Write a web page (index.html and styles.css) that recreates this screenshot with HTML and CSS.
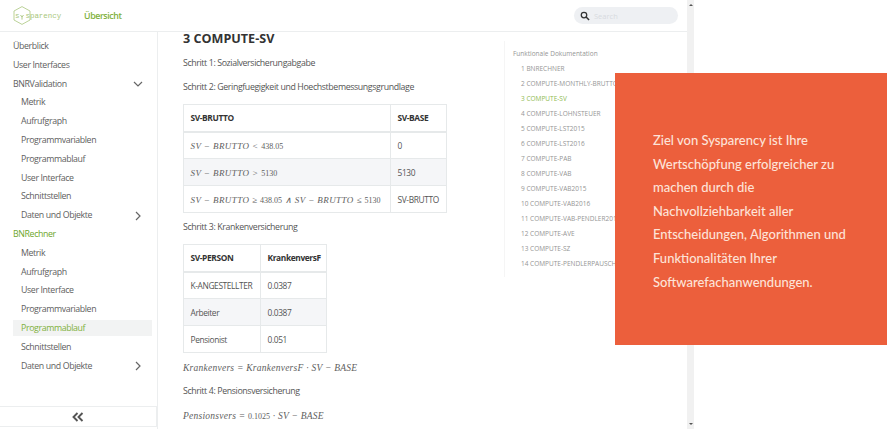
FILE: index.html
```html
<!DOCTYPE html>
<html lang="de">
<head>
<meta charset="utf-8">
<title>Sysparency</title>
<link rel="stylesheet" href="styles.css">
</head>
<body>
<div class="window">
  <div class="app">
    <header class="topbar">
      <div class="logo">
        <svg class="hex" viewBox="0 0 18 19" width="18" height="19"><path d="M9 .6 17 5v9l-8 4.4L1 14V5z" fill="none" stroke="#a9c77d" stroke-width=".8"/><path d="M7.5 9 9 11l1.500-2M9 11v2.600" fill="none" stroke="#9dbd6c" stroke-width=".8"/></svg>
        <span class="logo-s">s</span>
        <span class="logo-text">sparency</span>
      </div>
      <a class="top-link">Übersicht</a>
      <div class="search">
        <svg viewBox="0 0 12 12" width="10" height="10"><circle cx="4.8" cy="4.8" r="3.3" fill="none" stroke="#333" stroke-width="1.5"/><path d="m7.3 7.3 3.6 3.6" stroke="#333" stroke-width="1.8"/></svg>
        <span>Search</span>
      </div>
    </header>
    <div class="body">
      <aside class="sidebar">
        <nav class="nav">
          <div class="item">Überblick</div>
          <div class="item">User Interfaces</div>
          <div class="item">BNRValidation<svg class="chev" viewBox="0 0 10 6" width="10" height="6"><path d="m1 1 4 4 4-4" fill="none" stroke="#666" stroke-width="1.2"/></svg></div>
          <div class="item sub">Metrik</div>
          <div class="item sub">Aufrufgraph</div>
          <div class="item sub">Programmvariablen</div>
          <div class="item sub">Programmablauf</div>
          <div class="item sub">User Interface</div>
          <div class="item sub">Schnittstellen</div>
          <div class="item sub">Daten und Objekte<svg class="chev right" viewBox="0 0 6 10" width="6" height="10"><path d="m1 1 4 4-4 4" fill="none" stroke="#666" stroke-width="1.2"/></svg></div>
          <div class="item green">BNRechner</div>
          <div class="item sub">Metrik</div>
          <div class="item sub">Aufrufgraph</div>
          <div class="item sub">User Interface</div>
          <div class="item sub">Programmvariablen</div>
          <div class="item sub active">Programmablauf</div>
          <div class="item sub">Schnittstellen</div>
          <div class="item sub">Daten und Objekte<svg class="chev right" viewBox="0 0 6 10" width="6" height="10"><path d="m1 1 4 4-4 4" fill="none" stroke="#666" stroke-width="1.2"/></svg></div>
        </nav>
        <div class="collapse"><svg viewBox="0 0 12 10" width="12" height="10"><path d="M5.500 1 1.500 5l4 4M10.500 1l-4 4 4 4" fill="none" stroke="#555" stroke-width="1.900"/></svg></div>
      </aside>
      <main class="content">
        <h1>3 COMPUTE-SV</h1>
        <p class="after-h">Schritt 1: Sozialversicherungabgabe</p>
        <p class="gap">Schritt 2: Geringfuegigkeit und Hoechstbemessungsgrundlage</p>
        <table class="t1">
          <thead><tr><th class="c1">SV-BRUTTO</th><th>SV-BASE</th></tr></thead>
          <tbody>
            <tr><td><span class="math">SV − BRUTTO &lt; <b>438.05</b></span></td><td>0</td></tr>
            <tr><td><span class="math">SV − BRUTTO &gt; <b>5130</b></span></td><td>5130</td></tr>
            <tr><td><span class="math">SV − BRUTTO ≥ <b>438.05</b> ∧ SV − BRUTTO ≤ <b>5130</b></span></td><td>SV-BRUTTO</td></tr>
          </tbody>
        </table>
        <p>Schritt 3: Krankenversicherung</p>
        <table class="t2">
          <thead><tr><th class="c2">SV-PERSON</th><th>KrankenversF</th></tr></thead>
          <tbody>
            <tr><td>K-ANGESTELLTER</td><td>0.0387</td></tr>
            <tr><td>Arbeiter</td><td>0.0387</td></tr>
            <tr><td>Pensionist</td><td>0.051</td></tr>
          </tbody>
        </table>
        <p class="math line">Krankenvers = KrankenversF · SV − BASE</p>
        <p class="gap-s">Schritt 4: Pensionsversicherung</p>
        <p class="math line gap-l">Pensionsvers = <b>0.1025</b> · SV − BASE</p>
      </main>
      <aside class="toc">
        <div class="toc-title">Funktionale Dokumentation</div>
        <div class="toc-item">1 BNRECHNER</div>
        <div class="toc-item">2 COMPUTE-MONTHLY-BRUTTO</div>
        <div class="toc-item current">3 COMPUTE-SV</div>
        <div class="toc-item">4 COMPUTE-LOHNSTEUER</div>
        <div class="toc-item">5 COMPUTE-LST2015</div>
        <div class="toc-item">6 COMPUTE-LST2016</div>
        <div class="toc-item">7 COMPUTE-PAB</div>
        <div class="toc-item">8 COMPUTE-VAB</div>
        <div class="toc-item">9 COMPUTE-VAB2015</div>
        <div class="toc-item">10 COMPUTE-VAB2016</div>
        <div class="toc-item">11 COMPUTE-VAB-PENDLER2015</div>
        <div class="toc-item">12 COMPUTE-AVE</div>
        <div class="toc-item">13 COMPUTE-SZ</div>
        <div class="toc-item">14 COMPUTE-PENDLERPAUSCHALE</div>
      </aside>
    </div>
  </div>
  <div class="scrollbar"><span class="arrow up"></span><span class="arrow down"></span></div>
</div>
<div class="panel">
  <p>Ziel von Sysparency ist Ihre<br>Wertschöpfung erfolgreicher zu<br>machen durch die<br>Nachvollziehbarkeit aller<br>Entscheidungen, Algorithmen und<br>Funktionalitäten Ihrer<br>Softwarefachanwendungen.</p>
</div>
</body>
</html>
```

FILE: styles.css
```css
* { box-sizing: border-box; }
html, body { margin: 0; height: 100%; overflow: hidden; background: #fff; }
body { font-family: "Open Sans", sans-serif; color: #555; font-size: 8.8px; letter-spacing: -.38px; }

.window { display: flex; width: 694px; height: 429px; }
.app { width: 687px; height: 429px; display: flex; flex-direction: column; }

.scrollbar { width: 7px; background: #f1f1f1; position: relative; display: flex; flex-direction: column; justify-content: space-between; align-items: center; padding: 4px 0; }
.arrow { width: 0; height: 0; border-left: 2px solid transparent; border-right: 2px solid transparent; }
.arrow.up { border-bottom: 2px solid #555; }
.arrow.down { border-top: 2px solid #555; }

.topbar { height: 32px; flex: none; display: flex; align-items: center; border-bottom: 1px solid #eceeef; padding: 0 9px 0 13px; }
.logo { position: relative; width: 71px; height: 19px; display: flex; align-items: center; font-family: "Liberation Mono", monospace; font-size: 7.500px; letter-spacing: 0; color: #a9c77d; }
.hex { position: absolute; left: 0; top: 0; }
.logo-s { margin-left: 2px; }
.logo-text { margin-left: 6px; letter-spacing: -.05px; }
.top-link { color: #7fb13c; font-weight: 600; font-size: 8.800px; }
.search { margin-left: auto; width: 104px; height: 17px; border-radius: 9px; background: #eef0f3; display: flex; align-items: center; gap: 4px; padding-left: 6px; color: #d8dbdf; font-size: 7.500px; letter-spacing: 0; }

.body { flex: 1; display: flex; min-height: 0; }

.sidebar { width: 158px; flex: none; border-right: 1px solid #eceeef; display: flex; flex-direction: column; justify-content: space-between; padding-top: 5px; padding-bottom: 2px; }
.nav { display: flex; flex-direction: column; }
.item { height: 18.800px; line-height: 18.800px; padding-left: 13px; padding-right: 14px; display: flex; align-items: center; justify-content: space-between; color: #606060; white-space: nowrap; }
.item.sub { padding-left: 21px; }
.item.green { color: #6ea62b; }
.item.active { height: 16px; margin: 1.400px 5px 1.400px 13px; background: #f2f3f3; color: #7fb13c; padding-left: 8px; }
.chev.right { margin-right: 2px; }
.collapse { height: 21px; border: 1px solid #eceeef; border-left: 0; display: flex; align-items: center; justify-content: center; }

.content { width: 346px; flex: none; padding-left: 25px; }
h1 { font-size: 12.600px; line-height: 13px; font-weight: 700; color: #333; margin: 0; letter-spacing: 0; }
.content p { margin: 0; line-height: 14px; height: 14px; font-size: 8.800px; white-space: nowrap; }
.content .after-h { margin-top: 11px; }
.content .gap { margin-top: 10px; }
.content .gap-s { margin-top: 9px; }
.content .gap-l { margin-top: 11px; }

table { border-collapse: collapse; table-layout: fixed; font-size: 8.400px; color: #555; }
th, td { border: 1px solid #e6e9ea; padding: 0 6.500px; height: 27px; text-align: left; white-space: nowrap; }
th { color: #333; font-weight: 700; border-bottom-width: 2px; }
tbody tr:nth-child(2) { background: #f5f6f8; }
.t1 { width: 264px; margin-top: 10px; margin-bottom: 7px; }
.t1 .c1 { width: 207px; }
.t2 { width: 144px; margin-top: 10px; margin-bottom: 8px; }
.t2 .c2 { width: 77px; }

.math { font-family: "Liberation Serif", serif; font-style: italic; font-size: 9px; letter-spacing: .42px; color: #606060; }
.math b { font-style: normal; font-weight: 400; letter-spacing: 0; font-size: 8px; }
.content .math.line { font-size: 9.500px; letter-spacing: .25px; }

.toc { flex: 1; min-width: 0; margin-top: 9px; height: 236px; border-left: 1px solid #f5f5f5; padding: 5px 0 0 8px; color: #959595; font-size: 6.500px; letter-spacing: 0; white-space: nowrap; overflow: hidden; }
.toc-title { height: 15px; line-height: 15px; }
.toc-item { height: 15px; line-height: 15px; padding-left: 8px; }
.toc-item.current { color: #8fbb52; }

.panel { position: absolute; left: 615px; top: 73px; width: 272px; height: 272px; background: #ec5f3c; color: #fde3d8; padding: 56px 0 0 38px; font-family: "Lato", sans-serif; font-size: 13px; font-weight: 500; letter-spacing: 0; }
.panel p { margin: 0; line-height: 23.600px; white-space: nowrap; }
```
